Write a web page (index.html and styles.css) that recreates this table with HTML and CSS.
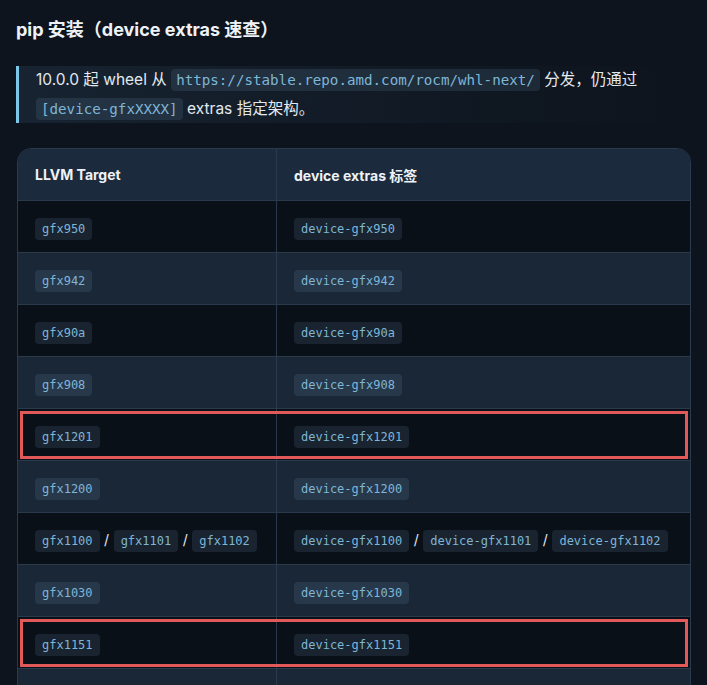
FILE: index.html
```html
<!DOCTYPE html>
<html lang="zh-CN">
<head>
    <meta charset="UTF-8">
    <meta name="viewport" content="width=device-width, initial-scale=1.0">
    <title>pip 安装</title>
    <link rel="stylesheet" href="styles.css">
</head>
<body>
    <h2 class="title">pip 安装（device extras 速查）</h2>

    <!-- Примечание -->
    <blockquote class="note">
        10.0.0 起 wheel 从 <code>https://stable.repo.amd.com/rocm/whl-next/</code> 分发，仍通过<br>
        <code>[device-gfxXXXX]</code> extras 指定架构。
    </blockquote>

    <!-- Таблица -->
    <div class="table-wrap">
        <table class="targets">
            <thead>
                <tr>
                    <th class="col-target">LLVM Target</th>
                    <th>device extras 标签</th>
                </tr>
            </thead>
            <tbody>
                <tr><td><code>gfx950</code></td><td><code>device-gfx950</code></td></tr>
                <tr><td><code>gfx942</code></td><td><code>device-gfx942</code></td></tr>
                <tr><td><code>gfx90a</code></td><td><code>device-gfx90a</code></td></tr>
                <tr><td><code>gfx908</code></td><td><code>device-gfx908</code></td></tr>
                <tr class="mark"><td><code>gfx1201</code></td><td><code>device-gfx1201</code></td></tr>
                <tr><td><code>gfx1200</code></td><td><code>device-gfx1200</code></td></tr>
                <tr>
                    <td><code>gfx1100</code> <span class="sep">/</span> <code>gfx1101</code> <span class="sep">/</span> <code>gfx1102</code></td>
                    <td><code>device-gfx1100</code> <span class="sep">/</span> <code>device-gfx1101</code> <span class="sep">/</span> <code>device-gfx1102</code></td>
                </tr>
                <tr><td><code>gfx1030</code></td><td><code>device-gfx1030</code></td></tr>
                <tr class="mark"><td><code>gfx1151</code></td><td><code>device-gfx1151</code></td></tr>
                <tr><td><code>gfx1150</code></td><td><code>device-gfx1150</code></td></tr>
            </tbody>
        </table>
    </div>
</body>
</html>
```

FILE: styles.css
```css
body {
    font-family: 'Inter', 'Noto Sans CJK SC', sans-serif;
    margin: 0;
    padding: 0 16px;
    color: #e3e9f0;
    background: #0d141d;
    overflow: hidden;
}

/* Заголовок */
.title {
    font-size: 18px;
    font-weight: 700;
    line-height: 20px;
    margin: 20px 0 26px;
    color: #eef2f6;
}

/* Примечание */
.note {
    margin: 0 0 25px;
    padding: 0 0 0 17px;
    border-left: 3px solid #7cc6ea;
    background: linear-gradient(90deg, rgba(60, 90, 120, 0.22), rgba(60, 90, 120, 0.04) 75%, transparent);
    font-size: 15.5px;
    line-height: 28.5px;
    color: #e3e9f0;
}

.note code {
    font-size: 14.2px;
    padding: 3px 5px;
}

code {
    font-family: 'DejaVu Sans Mono', monospace;
    font-size: 12px;
    padding: 4px 7px;
    border-radius: 4px;
    background: rgba(120, 160, 200, 0.14);
    color: #7fb6d6;
}

/* Таблица */
.table-wrap {
    width: 672px;
    margin-left: 1px;
    border: 1px solid #2a394b;
    border-radius: 14px;
    overflow: hidden;
}

.targets {
    width: 100%;
    border-collapse: collapse;
}

.targets th,
.targets td {
    height: 51px;
    padding: 0 17px;
    text-align: left;
    border-top: 1px solid #2a394b;
    border-left: 1px solid #2a394b;
}

.targets th:first-child,
.targets td:first-child {
    border-left: none;
}

.targets thead th {
    border-top: none;
    background: #1b2a3c;
    font-size: 14px;
    font-weight: 700;
    color: #eef2f6;
}

.col-target {
    width: 224px;
}

.targets tbody tr:nth-child(odd) {
    background: #0a1018;
}

.targets tbody tr:nth-child(even) {
    background: #1a2737;
}

.sep {
    font-size: 14px;
    color: #e3e9f0;
}

/* Выделение строк */
.targets tr.mark {
    outline: 3px solid #e25959;
    outline-offset: -5px;
}
```
